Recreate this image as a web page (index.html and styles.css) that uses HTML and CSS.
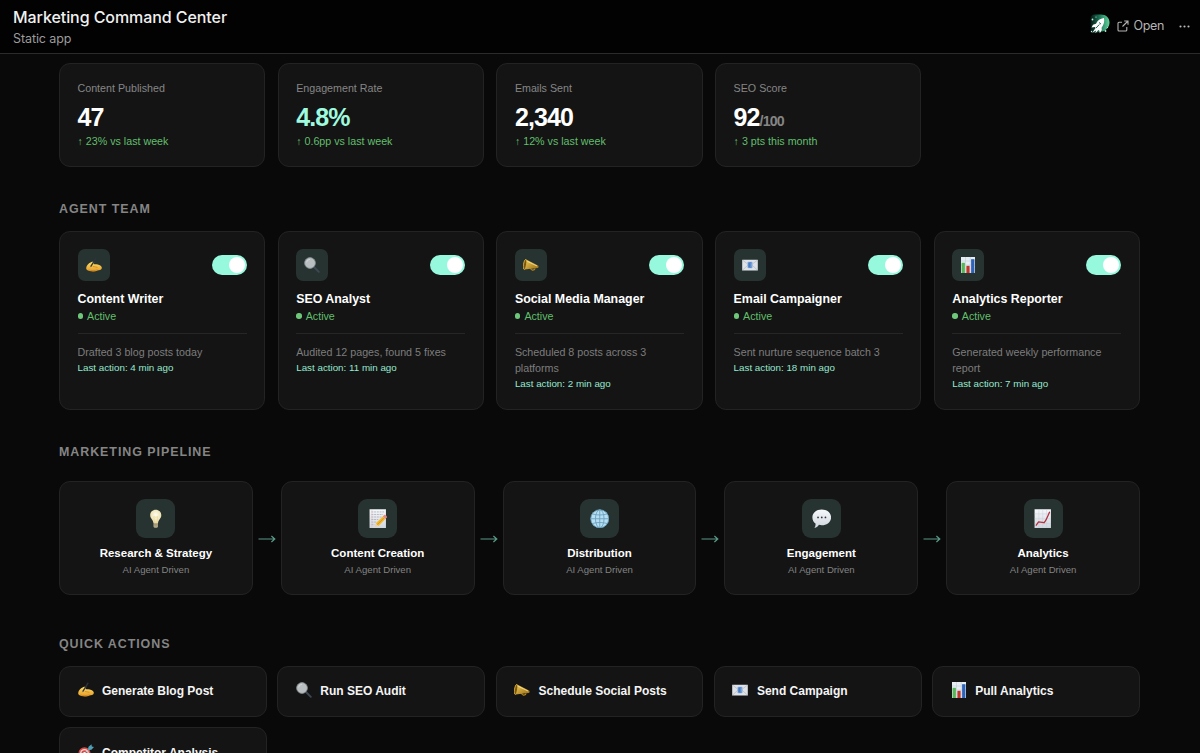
FILE: index.html
```
<!DOCTYPE html>
<html lang="en">
<head>
<meta charset="utf-8">
<title>Marketing Command Center</title>
<link rel="stylesheet" href="styles.css">
</head>
<body>
<svg class="sprite" aria-hidden="true">
  <defs>
    <linearGradient id="skin" x1="0" y1="0" x2="0" y2="1"><stop offset="0" stop-color="#ffdf68"/><stop offset="1" stop-color="#e59a25"/></linearGradient>
    <linearGradient id="brass" x1="0" y1="0" x2="1" y2="1"><stop offset="0" stop-color="#f3d264"/><stop offset="1" stop-color="#9a6b10"/></linearGradient>
    <linearGradient id="paper" x1="0" y1="0" x2="0" y2="1"><stop offset="0" stop-color="#f6f8fb"/><stop offset="1" stop-color="#cfd6de"/></linearGradient>
    <radialGradient id="glow" cx=".5" cy=".4" r=".6"><stop offset="0" stop-color="#fffdf0"/><stop offset="1" stop-color="#e8d9a0"/></radialGradient>
    <linearGradient id="space" x1="0" y1="0" x2="1" y2="0"><stop offset="0" stop-color="#041713"/><stop offset=".5" stop-color="#1f7a5c"/><stop offset="1" stop-color="#63d39b"/></linearGradient>
  </defs>
  <symbol id="write" viewBox="0 0 16 16">
    <path d="M.2 11C.4 8.800 2.200 6.500 5 5.300c1.700-.8 3.400-.6 3.100.6l-.9 1.200c2 .2 4.300.3 6 .9 2 .7 3 2.200 2.500 3.500-.5 1.500-2.600 1.600-4.200 1.900-2 1.200-5.600 1.400-8 .6C1.200 13.500 0 12.800.2 11z" fill="url(#skin)"/>
    <path d="M2.500 13c2.500.8 6.300.8 9-.1M6.800 9.400l4.700 1" stroke="#c47a1c" stroke-width=".6" fill="none"/>
    <path d="M5 9.200L10 1.200" stroke="#30343a" stroke-width="1.300" stroke-linecap="round"/>
    <path d="M4.300 10.300l.7-1.200" stroke="#6b7078" stroke-width=".6"/>
  </symbol>
  <symbol id="search" viewBox="0 0 16 16">
    <path d="M10 10l4.800 4.800" stroke="#3e4854" stroke-width="1.900" stroke-linecap="round"/>
    <circle cx="6" cy="6" r="5.400" fill="#b9bec0" stroke="#888e92" stroke-width=".8"/>
    <path d="M2.600 5.400A3.700 3.700 0 0 1 6 2.300" stroke="#d8dcdd" stroke-width=".8" fill="none"/>
  </symbol>
  <symbol id="horn" viewBox="0 0 16 16">
    <path d="M7.500 11c.3 2.600 3.500 2.900 4.700.4" fill="none" stroke="#b58a1e" stroke-width="1.100"/>
    <path d="M2.600 2.200L15 8.500c.9.6.7 2.400-.4 2.500L1.600 12.600C-.2 9.800.3 4 2.600 2.200z" fill="url(#brass)"/>
    <ellipse cx="2" cy="7.500" rx="1.500" ry="5" transform="rotate(8 2 7.500)" fill="#7d560d" stroke="#e3ba48" stroke-width=".7"/>
    <path d="M4.300 4.300L14 9" stroke="#ffe694" stroke-width=".8"/>
  </symbol>
  <symbol id="mail" viewBox="0 0 16 16">
    <rect x=".2" y="2.700" width="15.600" height="10.800" rx=".6" fill="#dfe3e8"/>
    <path d="M.5 3l7.500 6 7.500-6M.5 13.200L6 8M15.500 13.200L10 8" stroke="#aab1b9" stroke-width=".6" fill="none"/>
    <rect x="5.500" y="4.700" width="5" height="6.600" rx=".7" fill="#8dafdc"/>
    <path d="M9.500 6H7v4h2.500M7 8h2.300" stroke="#376fbd" stroke-width="1.100" fill="none"/>
  </symbol>
  <symbol id="bars" viewBox="0 0 16 16">
    <path d="M1 0h14v16H1z" fill="#e6edf3"/>
    <path d="M1 4h14M1 8h14M1 12h14M5.500 0v16M10.300 0v16" stroke="#bac7d2" stroke-width=".5"/>
    <path d="M1.600 5.800h3.300V16H1.600z" fill="#57b655"/>
    <path d="M6.400 8.800h3.200V16H6.400z" fill="#c43429"/>
    <path d="M11.100 2.200h3.300V16h-3.300z" fill="#2d62b8"/>
  </symbol>
  <symbol id="bulb" viewBox="0 0 20 20">
    <path d="M10 .8c3.300 0 5.700 2.400 5.700 5.500 0 3.400-3.200 4.700-3.300 8H7.600c-.1-3.300-3.300-4.600-3.300-8C4.300 3.200 6.700.8 10 .8z" fill="url(#glow)"/>
    <path d="M8.700 14L8 7.700l2 .8 2-.8-.7 6.300" stroke="#e5cf83" stroke-width=".5" fill="none"/>
    <path d="M7.700 14.300h4.600v3.300c0 1-.9 1.600-2.300 1.600s-2.300-.6-2.300-1.600z" fill="#b9af8e"/>
    <path d="M7.700 15.700h4.600M7.700 17.300h4.600" stroke="#7f7660" stroke-width=".5"/>
  </symbol>
  <symbol id="memo" viewBox="0 0 20 20">
    <path d="M1.600.3h16.800v19.400H1.600z" fill="url(#paper)"/>
    <path d="M3.500 3h13M3.500 5.600h12M3.500 8.200h11M3.500 10.800h7M3.500 13.400h5M3.500 16h3" stroke="#a9a9b2" stroke-width=".8" stroke-dasharray="2 .8"/>
    <path d="M4 .3v19.400" stroke="#e3a6a6" stroke-width=".4"/>
    <path d="M6.700 18.800l1.400-4.100 2.600 2.700z" fill="#eed0a0"/>
    <path d="M8.100 14.700l7-7.100 2.700 2.700-7.100 7.100z" fill="#f2b72c"/>
    <path d="M9.500 16.100l7-7.100" stroke="#c8831b" stroke-width=".6"/>
    <path d="M15.100 7.600l1.500-1.500c1-.8 3.400 1.500 2.700 2.600l-1.500 1.600z" fill="#e58b83"/>
  </symbol>
  <symbol id="globe" viewBox="0 0 20 20">
    <circle cx="10" cy="10" r="9.300" fill="#b7dff2"/>
    <g fill="none" stroke="#6a9fbe" stroke-width=".9"><circle cx="10" cy="10" r="9.200"/><ellipse cx="10" cy="10" rx="4.400" ry="9.200"/><path d="M10 .8v18.400M.8 10h18.400M2.500 5.100c4.700 1.400 10.300 1.400 15 0M2.500 14.900c4.700-1.400 10.300-1.400 15 0"/></g>
  </symbol>
  <symbol id="chat" viewBox="0 0 20 20">
    <path d="M10 .6c5.500 0 9.600 3.500 9.600 8s-4.100 8-9.600 8c-1 0-2-.1-2.900-.4-.8 1.600-2.300 2.900-4.600 3.300 1-1.300 1.300-2.800 1.100-4.600C1.600 13.500.4 11.200.4 8.600c0-4.500 4.100-8 9.600-8z" fill="url(#paper)"/>
    <g fill="#303338"><circle cx="6.200" cy="8.700" r=".9"/><circle cx="10" cy="8.700" r=".9"/><circle cx="13.800" cy="8.700" r=".9"/></g>
  </symbol>
  <symbol id="trend" viewBox="0 0 20 20">
    <path d="M1.600.3h16.800v19.400H1.600z" fill="url(#paper)"/>
    <path d="M1.600 5h16.800M1.600 10h16.800M1.600 15h16.800M6 .3v19.400M10 .3v19.400M14 .3v19.400" stroke="#c0c9d2" stroke-width=".4"/>
    <path d="M3 17l2.700-3.800 5.600.9c1.700-1.500 3.500-5.700 5.800-11.300" fill="none" stroke="#b62f43" stroke-width="1.300" stroke-linejoin="round"/>
  </symbol>
  <symbol id="target" viewBox="0 0 16 16">
    <circle cx="6.500" cy="9.300" r="6" fill="#d94b46"/><circle cx="6.500" cy="9.300" r="4.400" fill="#eedfdd"/><circle cx="6.500" cy="9.300" r="3.100" fill="#d94b46"/><circle cx="6.500" cy="9.300" r="1.300" fill="#fff"/>
    <path d="M6.500 9.300l6-5.500" stroke="#b7c3ca" stroke-width="1"/>
    <path d="M9.800 6.300l.7-3.600L13.500.3l.3 2.100 2.200.5-2.600 2.800z" fill="#4fa0b5"/>
  </symbol>
  <symbol id="arrow" viewBox="0 0 18 8">
    <path d="M.5 4h16M13.400 1l3.400 3-3.400 3" fill="none" stroke="currentColor" stroke-width="1.200"/>
  </symbol>
</svg>

<header class="topbar">
  <div class="heading">
    <h1 class="app-title">Marketing Command Center</h1>
    <p class="app-type">Static app</p>
  </div>
  <div class="tools">
    <svg class="logo" viewBox="0 0 20 20">
      <path d="M.5 5c0-3 1.500-4.500 4.500-4.500h6c5 0 8.500 3.500 8.500 8S16 17 12 17.500L4 19H.5z" fill="url(#space)"/>
      <path d="M14 4C10 4.500 7.500 6.500 6 9.700l-3 1-1.500 2.800 3.300-.6.8 1-3.300 4.800L6 16.500l-.6 2.800 3-3.300 1 .7.400 2.500 2-3.200-.2-2.300C13.600 11 14.800 8 14 4z" fill="#fff"/>
      <path d="M6 14l3.300-3.500M9 8.500l2 1.600" stroke="#1c6b53" stroke-width="1"/>
      <g fill="#b9efdc"><circle cx="2.500" cy="5.500" r=".9"/><circle cx="6" cy="3" r=".6"/><circle cx="15.500" cy="17" r=".9"/><circle cx="17.500" cy="13.500" r=".5"/><circle cx="1.500" cy="17.500" r=".7"/></g>
    </svg>
    <a class="open">
      <svg class="open-icon" viewBox="0 0 12 12"><path d="M5 2.200H2c-.6 0-1 .4-1 1V10c0 .6.400 1 1 1h6.800c.6 0 1-.4 1-1V7M7.200 1H11v3.800M11 1L5.500 6.500" fill="none" stroke="currentColor" stroke-width="1.100"/></svg>
      <span>Open</span>
    </a>
    <svg class="more" viewBox="0 0 11 3"><circle cx="1.500" cy="1.500" r="1.050"/><circle cx="5.500" cy="1.500" r="1.050"/><circle cx="9.500" cy="1.500" r="1.050"/></svg>
  </div>
</header>

<main class="content">
  <section class="grid stats">
    <article class="card stat"><p class="label">Content Published</p><p class="value">47</p><p class="delta">↑ 23% vs last week</p></article>
    <article class="card stat"><p class="label">Engagement Rate</p><p class="value mint">4.8%</p><p class="delta">↑ 0.6pp vs last week</p></article>
    <article class="card stat"><p class="label">Emails Sent</p><p class="value">2,340</p><p class="delta">↑ 12% vs last week</p></article>
    <article class="card stat"><p class="label">SEO Score</p><p class="value">92<span class="outof">/100</span></p><p class="delta">↑ 3 pts this month</p></article>
  </section>

  <h2 class="section-title">AGENT TEAM</h2>
  <section class="grid agents">
    <article class="card agent">
      <div class="agent-top"><span class="tile"><svg><use href="#write"/></svg></span><span class="toggle"></span></div>
      <h3 class="agent-name">Content Writer</h3><p class="status">Active</p>
      <div class="activity"><p>Drafted 3 blog posts today</p><p class="last">Last action: 4 min ago</p></div>
    </article>
    <article class="card agent">
      <div class="agent-top"><span class="tile"><svg><use href="#search"/></svg></span><span class="toggle"></span></div>
      <h3 class="agent-name">SEO Analyst</h3><p class="status">Active</p>
      <div class="activity"><p>Audited 12 pages, found 5 fixes</p><p class="last">Last action: 11 min ago</p></div>
    </article>
    <article class="card agent">
      <div class="agent-top"><span class="tile"><svg><use href="#horn"/></svg></span><span class="toggle"></span></div>
      <h3 class="agent-name">Social Media Manager</h3><p class="status">Active</p>
      <div class="activity"><p>Scheduled 8 posts across 3 platforms</p><p class="last">Last action: 2 min ago</p></div>
    </article>
    <article class="card agent">
      <div class="agent-top"><span class="tile"><svg><use href="#mail"/></svg></span><span class="toggle"></span></div>
      <h3 class="agent-name">Email Campaigner</h3><p class="status">Active</p>
      <div class="activity"><p>Sent nurture sequence batch 3</p><p class="last">Last action: 18 min ago</p></div>
    </article>
    <article class="card agent">
      <div class="agent-top"><span class="tile"><svg><use href="#bars"/></svg></span><span class="toggle"></span></div>
      <h3 class="agent-name">Analytics Reporter</h3><p class="status">Active</p>
      <div class="activity"><p>Generated weekly performance report</p><p class="last">Last action: 7 min ago</p></div>
    </article>
  </section>

  <h2 class="section-title">MARKETING PIPELINE</h2>
  <section class="pipeline">
    <article class="card stage"><span class="tile large"><svg><use href="#bulb"/></svg></span><h3 class="stage-name">Research &amp; Strategy</h3><p class="stage-note">AI Agent Driven</p></article>
    <svg class="arrow"><use href="#arrow"/></svg>
    <article class="card stage"><span class="tile large"><svg><use href="#memo"/></svg></span><h3 class="stage-name">Content Creation</h3><p class="stage-note">AI Agent Driven</p></article>
    <svg class="arrow"><use href="#arrow"/></svg>
    <article class="card stage"><span class="tile large"><svg><use href="#globe"/></svg></span><h3 class="stage-name">Distribution</h3><p class="stage-note">AI Agent Driven</p></article>
    <svg class="arrow"><use href="#arrow"/></svg>
    <article class="card stage"><span class="tile large"><svg><use href="#chat"/></svg></span><h3 class="stage-name">Engagement</h3><p class="stage-note">AI Agent Driven</p></article>
    <svg class="arrow"><use href="#arrow"/></svg>
    <article class="card stage"><span class="tile large"><svg><use href="#trend"/></svg></span><h3 class="stage-name">Analytics</h3><p class="stage-note">AI Agent Driven</p></article>
  </section>

  <h2 class="section-title actions-title">QUICK ACTIONS</h2>
  <section class="grid actions">
    <div class="card action"><svg><use href="#write"/></svg><span>Generate Blog Post</span></div>
    <div class="card action"><svg><use href="#search"/></svg><span>Run SEO Audit</span></div>
    <div class="card action"><svg><use href="#horn"/></svg><span>Schedule Social Posts</span></div>
    <div class="card action"><svg><use href="#mail"/></svg><span>Send Campaign</span></div>
    <div class="card action"><svg><use href="#bars"/></svg><span>Pull Analytics</span></div>
    <div class="card action"><svg><use href="#target"/></svg><span>Competitor Analysis</span></div>
  </section>
</main>
</body>
</html>
```
FILE: styles.css
```
* { box-sizing: border-box; margin: 0; }

body {
  height: 753px;
  overflow: hidden;
  display: flex;
  flex-direction: column;
  background: #090909;
  color: #fff;
  font-family: "Liberation Sans", Arial, sans-serif;
}

.sprite { position: absolute; width: 0; height: 0; }

.topbar {
  flex: none;
  display: flex;
  justify-content: space-between;
  height: 54px;
  padding: 7px 10px 0 13px;
  background: #020202;
  border-bottom: 1px solid #2b2b2b;
  font-family: Inter, sans-serif;
}
.app-title { font-size: 16px; line-height: 20px; font-weight: 500; letter-spacing: -.07px; color: #f0f0f0; }
.app-type { margin-top: 3px; font-size: 12.5px; line-height: 17px; letter-spacing: -.1px; color: #9c9c9c; }
.tools { display: flex; align-items: center; height: 38px; color: #b4b4b4; }
.logo { width: 20px; height: 20px; margin: -4px 7px 0 0; }
.open { display: flex; align-items: center; gap: 5px; font-size: 12.5px; line-height: 18px; letter-spacing: -.35px; }
.open-icon { width: 12px; height: 12px; }
.more { width: 11px; height: 3px; margin-left: 15px; fill: #bdbdbd; }

.content { padding: 9px 60px 0 59px; }
.grid { display: grid; grid-template-columns: repeat(5, 1fr); gap: 12.5px; }
.card { background: #141414; border: 1px solid #232323; border-radius: 11px; }

.stat { height: 103.5px; padding: 15.5px 17.5px 0; }
.label { font-size: 10.7px; line-height: 16px; color: #868686; }
.value { height: 30px; margin-top: 6px; font-size: 25px; line-height: 30px; font-weight: 700; letter-spacing: -.9px; }
.mint { color: #9ffbdf; }
.outof { font-size: 14.2px; color: #858585; }
.delta { margin-top: 1.5px; font-size: 10.7px; line-height: 16px; color: #61bf6c; }

.section-title { margin: 34.5px 0 13.5px; font-size: 12.45px; line-height: 16px; font-weight: 700; letter-spacing: .95px; color: #858585; }
.actions-title { margin-top: 41.5px; }

.agent { height: 179px; padding: 17px 17.5px; }
.agent-top { display: flex; justify-content: space-between; align-items: center; }
.tile { display: flex; align-items: center; justify-content: center; width: 32px; height: 32px; border-radius: 7px; background: #263330; }
.tile svg { width: 16px; height: 16px; }
.toggle { display: flex; justify-content: flex-end; align-items: center; width: 35px; height: 20px; padding: 2px; border-radius: 10px; background: #96f8dc; }
.toggle::after { content: ""; width: 16px; height: 16px; border-radius: 50%; background: #fff; }
.agent-name { margin-top: 9px; font-size: 12.4px; line-height: 18px; font-weight: 700; white-space: nowrap; }
.status { display: flex; align-items: center; gap: 4px; font-size: 10.7px; line-height: 17px; color: #61bf6c; }
.status::before { content: ""; width: 5.5px; height: 5.5px; border-radius: 50%; background: #6dc87a; }
.activity { margin-top: 8.5px; padding-top: 10px; border-top: 1px solid #262626; font-size: 10.7px; line-height: 16px; color: #7d7d7d; }
.last { font-size: 9.8px; color: #96e8d0; }

.pipeline { display: flex; align-items: center; margin-top: 20.5px; }
.stage { flex: 1; height: 114px; padding-top: 17.5px; display: flex; flex-direction: column; align-items: center; }
.tile.large { width: 39px; height: 39px; border-radius: 9px; }
.tile.large svg { width: 19.5px; height: 19.5px; }
.stage-name { margin-top: 7px; font-size: 11.5px; line-height: 16px; font-weight: 700; }
.stage-note { margin-top: 1px; font-size: 9.6px; line-height: 16px; color: #838383; }
.arrow { flex: none; width: 18px; height: 8px; margin: 3px 5px 0; color: #5a9a87; }

.actions { gap: 10.5px; }
.action { display: flex; align-items: center; gap: 8.5px; height: 51px; padding-left: 17.5px; font-size: 12px; font-weight: 700; color: #f5f5f5; }
.action svg { width: 16px; height: 16px; margin-top: -2px; }
```
